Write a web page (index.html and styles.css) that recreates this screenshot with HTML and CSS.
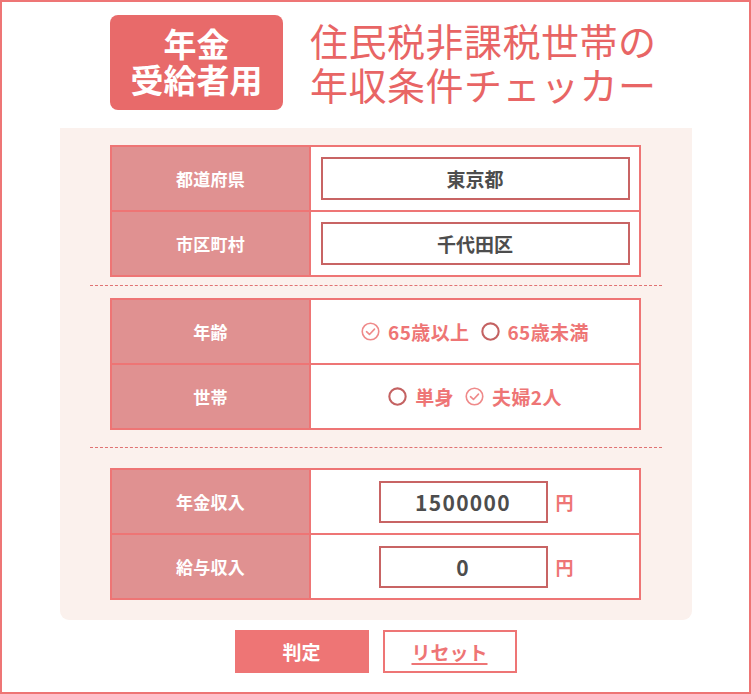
FILE: index.html
```html
<!DOCTYPE html>
<html lang="ja">
<head>
<meta charset="utf-8">
<title>住民税非課税世帯の年収条件チェッカー</title>
<link rel="stylesheet" href="styles.css">
</head>
<body>
<div class="frame">
  <header class="header">
    <div class="badge"><span class="badge-line">年金</span><span class="badge-line">受給者用</span></div>
    <h1 class="title"><span class="title-line">住民税非課税世帯の</span><span class="title-line">年収条件チェッカー</span></h1>
  </header>

  <main class="panel">
    <div class="tbl">
      <div class="label">都道府県</div>
      <div class="value"><input class="field field-wide" type="text" value="東京都" readonly></div>
      <div class="label">市区町村</div>
      <div class="value"><input class="field field-wide" type="text" value="千代田区" readonly></div>
    </div>

    <hr class="sep sep-1">

    <div class="tbl">
      <div class="label">年齢</div>
      <div class="value options">
        <span class="opt">
          <svg class="ico" viewBox="0 0 20 20" width="19" height="19"><circle cx="10" cy="10" r="8.7" fill="none" stroke="#ef8a8a" stroke-width="1.7"/><polyline points="5.8,10.2 8.9,13.1 14.2,7.5" fill="none" stroke="#ef8a8a" stroke-width="1.7" stroke-linecap="round" stroke-linejoin="round"/></svg>
          65歳以上
        </span>
        <span class="opt">
          <svg class="ico" viewBox="0 0 20 20" width="19" height="19"><circle cx="10" cy="10" r="8.6" fill="none" stroke="#c46262" stroke-width="2.2"/></svg>
          65歳未満
        </span>
      </div>
      <div class="label">世帯</div>
      <div class="value options">
        <span class="opt">
          <svg class="ico" viewBox="0 0 20 20" width="19" height="19"><circle cx="10" cy="10" r="8.6" fill="none" stroke="#c46262" stroke-width="2.2"/></svg>
          単身
        </span>
        <span class="opt">
          <svg class="ico" viewBox="0 0 20 20" width="19" height="19"><circle cx="10" cy="10" r="8.7" fill="none" stroke="#ef8a8a" stroke-width="1.7"/><polyline points="5.8,10.2 8.9,13.1 14.2,7.5" fill="none" stroke="#ef8a8a" stroke-width="1.7" stroke-linecap="round" stroke-linejoin="round"/></svg>
          夫婦2人
        </span>
      </div>
    </div>

    <hr class="sep sep-2">

    <div class="tbl">
      <div class="label">年金収入</div>
      <div class="value money"><input class="field field-num" type="text" value="1500000" readonly><span class="yen">円</span></div>
      <div class="label">給与収入</div>
      <div class="value money"><input class="field field-num" type="text" value="0" readonly><span class="yen">円</span></div>
    </div>
  </main>

  <div class="actions">
    <button class="btn btn-primary" type="button">判定</button>
    <button class="btn btn-outline" type="button">リセット</button>
  </div>
</div>
</body>
</html>
```

FILE: styles.css
```css
* {
  box-sizing: border-box;
}

html, body {
  margin: 0;
  padding: 0;
  background: #ffffff;
}

body {
  font-family: "Noto Sans CJK JP", "Noto Sans", sans-serif;
  color: #4a4a4a;
}

.frame {
  width: 751px;
  height: 694px;
  border: 2px solid #ee7575;
  display: flex;
  flex-direction: column;
  align-items: center;
}

.header {
  align-self: stretch;
  display: flex;
  align-items: flex-start;
  padding: 13px 0 0 108px;
  gap: 27px;
  height: 126px;
}

.badge {
  width: 173px;
  height: 95px;
  background: #e86a6a;
  border-radius: 8px;
  color: #ffffff;
  font-weight: 700;
  font-size: 33px;
  text-align: center;
  padding-top: 10px;
  display: flex;
  flex-direction: column;
  align-items: center;
}

.badge-line {
  display: block;
  height: 36px;
  line-height: 36px;
}

.title {
  margin: 0;
  padding-top: 3px;
  font-weight: 400;
  font-size: 38px;
  color: #e86565;
  letter-spacing: 0.5px;
  display: flex;
  flex-direction: column;
}

.title-line {
  display: block;
  height: 44px;
  line-height: 44px;
}

.panel {
  width: 632px;
  background: #fbf1ed;
  border-radius: 0 0 9px 9px;
  padding: 17px 0 20px;
  display: flex;
  flex-direction: column;
  align-items: center;
}

.tbl {
  width: 531px;
  display: grid;
  grid-template-columns: 197px 1fr;
  grid-auto-rows: 63px;
  gap: 2px;
  background: #ee7575;
  border: 2px solid #ee7575;
}

.label {
  background: #e09191;
  color: #ffffff;
  font-weight: 700;
  font-size: 17px;
  letter-spacing: 0.3px;
  display: flex;
  align-items: center;
  justify-content: center;
}

.value {
  background: #ffffff;
  display: flex;
  align-items: center;
  justify-content: center;
}

.field {
  height: 43px;
  border: 2px solid #c86464;
  background: #ffffff;
  font-family: inherit;
  font-weight: 700;
  font-size: 19px;
  color: #4d4d4d;
  text-align: center;
  padding: 0;
  outline: none;
  border-radius: 0;
}

.field-wide {
  width: 309px;
}

.field-num {
  width: 169px;
  height: 42px;
  font-size: 21px;
  letter-spacing: 1.3px;
}

.money {
  gap: 8px;
  padding-left: 2px;
}

.yen {
  color: #ee7575;
  font-weight: 700;
  font-size: 18px;
}

.options {
  gap: 11px;
}

.opt {
  display: inline-flex;
  align-items: center;
  gap: 8px;
  color: #ee7575;
  font-weight: 700;
  font-size: 19px;
  letter-spacing: 0.4px;
}

.ico {
  display: block;
}

.sep {
  width: 572px;
  border: 0;
  border-top: 1px dashed #e07272;
  height: 0;
  margin: 0;
}

.sep-1 {
  margin: 8px 0 12px;
}

.sep-2 {
  margin: 17px 0 20px;
}

.actions {
  display: flex;
  gap: 14px;
  margin-top: 10px;
}

.btn {
  width: 134px;
  height: 43px;
  font-family: inherit;
  font-weight: 700;
  font-size: 19px;
  border-radius: 0;
  cursor: pointer;
  padding: 0;
}

.btn-primary {
  background: #ee7575;
  border: 0;
  color: #ffffff;
}

.btn-outline {
  background: #ffffff;
  border: 2px solid #ee7575;
  color: #ee7575;
  text-decoration: underline;
  text-decoration-thickness: 2px;
  text-underline-offset: 3px;
}
```
